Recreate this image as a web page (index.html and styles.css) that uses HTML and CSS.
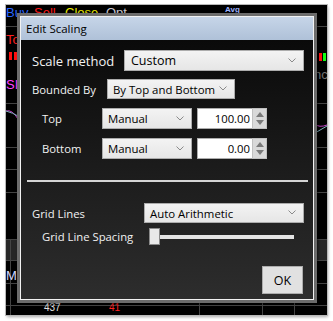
FILE: index.html
```html
<!DOCTYPE html>
<html>
<head>
<meta charset="utf-8">
<link rel="stylesheet" href="styles.css">
</head>
<body>
<div class="shot">
  <div class="chart">
    <div class="band" style="top:234px;height:21px"></div>
    <div class="hl" style="top:21px"></div>
    <div class="hl" style="top:98px"></div>
    <div class="hl" style="top:142px"></div>
    <div class="hl" style="top:164px"></div>
    <div class="hl" style="top:187px"></div>
    <div class="hl" style="top:234px"></div>
    <div class="hl" style="top:255px"></div>
    <div class="hl" style="top:278px"></div>
    <div class="hl" style="top:300px"></div>
    <div class="vl" style="left:4px;top:234px;height:76px"></div>
    <div class="vl" style="left:193px;top:296px;height:14px"></div>
    <div class="vl" style="left:256px;top:296px;height:14px"></div>
    <div class="vl" style="left:288px;top:296px;height:14px"></div>

    <span class="lab buy" style="left:0;top:0">Buy</span>
    <span class="lab sell" style="left:28px;top:0">Sell</span>
    <span class="lab close" style="left:59px;top:0">Close</span>
    <span class="lab opt" style="left:100px;top:0">Opt</span>
    <span class="lab avg" style="left:219px;top:0">Avg</span>
    <span class="lab vol" style="left:0;top:27px">Tol</span>
    <span class="bar red" style="left:3px;top:47px"></span>
    <span class="bar red" style="left:8px;top:47px"></span>
    <span class="lab rsi" style="left:0;top:72px">SI</span>
    <span class="lab m" style="left:0;top:263px">M</span>
    <span class="lab num437" style="left:38px;top:297px">437</span>
    <span class="lab num41" style="left:103px;top:297px">41</span>
    <span class="bar red" style="left:313px;top:48px"></span>
    <span class="bar green" style="left:317px;top:48px"></span>
    <span class="lab nc" style="left:308px;top:62px">nc</span>
    <svg class="curves" width="321" height="310" viewBox="0 0 321 310">
      <path d="M0 106 Q6 104 12 114" stroke="#c040c0" stroke-width="1" fill="none"/>
      <path d="M0 106 Q7 108 12 111" stroke="#80b0c0" stroke-width="1" fill="none"/>
      <path d="M309 119 Q313 123 321 120" stroke="#c040c0" stroke-width="1" fill="none"/>
      <path d="M309 128 L321 121" stroke="#80b0c0" stroke-width="1" fill="none"/>
    </svg>

    <div class="dialog">
      <div class="inner">
        <div class="titlebar">Edit Scaling</div>
        <div class="body">
          <div class="row r-scale">
            <span class="lbl big w-scale">Scale method</span>
            <div class="combo c-scale">Custom<svg class="chev" width="8" height="5" viewBox="0 0 8 5"><path d="M0.5 0.5 L4 4 L7.5 0.5" stroke="#8a8a8a" stroke-width="1" fill="none"/></svg></div>
          </div>
          <div class="row r-bound">
            <span class="lbl w-bound">Bounded By</span>
            <div class="combo c-bound">By Top and Bottom<svg class="chev" width="8" height="5" viewBox="0 0 8 5"><path d="M0.5 0.5 L4 4 L7.5 0.5" stroke="#8a8a8a" stroke-width="1" fill="none"/></svg></div>
          </div>
          <div class="row r-top">
            <span class="lbl ind w-sub">Top</span>
            <div class="combo c-man">Manual<svg class="chev" width="8" height="5" viewBox="0 0 8 5"><path d="M0.5 0.5 L4 4 L7.5 0.5" stroke="#8a8a8a" stroke-width="1" fill="none"/></svg></div>
            <div class="numbox">100.00</div>
            <div class="spin"><span class="up"></span><span class="down"></span></div>
          </div>
          <div class="row r-bot">
            <span class="lbl ind w-sub">Bottom</span>
            <div class="combo c-man">Manual<svg class="chev" width="8" height="5" viewBox="0 0 8 5"><path d="M0.5 0.5 L4 4 L7.5 0.5" stroke="#8a8a8a" stroke-width="1" fill="none"/></svg></div>
            <div class="numbox">0.00</div>
            <div class="spin"><span class="up"></span><span class="down"></span></div>
          </div>
          <div class="sep"></div>
          <div class="row r-grid">
            <span class="lbl w-grid">Grid Lines</span>
            <div class="combo c-grid">Auto Arithmetic<svg class="chev" width="8" height="5" viewBox="0 0 8 5"><path d="M0.5 0.5 L4 4 L7.5 0.5" stroke="#8a8a8a" stroke-width="1" fill="none"/></svg></div>
          </div>
          <div class="row r-spacing">
            <span class="lbl ind w-spacing">Grid Line Spacing</span>
            <div class="slider"><div class="thumb"></div><div class="track"></div></div>
          </div>
          <div class="foot"><div class="btn">OK</div></div>
        </div>
      </div>
    </div>
  </div>
</div>
</body>
</html>
```
FILE: styles.css
```css
* { box-sizing: border-box; }
html, body { margin: 0; padding: 0; background: #ffffff; }
body { font-family: "Open Sans", "Noto Sans", sans-serif; }
.shot { width: 333px; height: 321px; padding: 5px 6px 6px 6px; background: #fff; }
.chart {
  position: relative; width: 321px; height: 310px; background: #000;
  overflow: hidden;
  box-shadow: 0 0 0 1px #b8b8b8, 1px 2px 3px rgba(0,0,0,0.35);
}
.hl { position: absolute; left: 0; right: 0; height: 1px; background: #444; }
.vl { position: absolute; width: 1px; background: #444; }
.band { position: absolute; left: 0; right: 0; background: #262626; }
.lab { position: absolute; font-family: "Liberation Sans", sans-serif; font-size: 13px; line-height: 15px; white-space: nowrap; }
.buy { color: #2a66ff; }
.sell { color: #ff1a1a; }
.close { color: #e8e800; }
.opt { color: #c8c8d0; }
.avg { color: #9fb4ff; font-size: 8px; line-height: 9px; font-weight: bold; }
.vol { color: #ff2020; }
.rsi { color: #ff40ff; }
.m { color: #d0d8ff; }
.num437 { color: #e0e0e0; font-size: 10px; line-height: 12px; }
.num41 { color: #ff2020; font-size: 10px; line-height: 12px; }
.nc { color: #707070; }
.bar { position: absolute; width: 3px; height: 8px; }
.bar.red { background: #ff1010; }
.bar.green { background: #10ff10; }
.curves { position: absolute; left: 0; top: 0; }

.dialog {
  position: absolute; left: 11px; top: 8px; width: 300px; height: 290px;
  border: 3px solid #6c6c6c;
  box-shadow: 1px 1px 2px rgba(0,0,0,0.5);
}
.inner { height: 100%; border: 1px solid #f2f2f2; display: flex; flex-direction: column; }
.titlebar {
  height: 23px; flex: none; padding-left: 5px;
  background: linear-gradient(#c6d5e8, #afc1d8);
  color: #000; font-size: 11.5px; line-height: 23px;
}
.body {
  flex: 1; display: flex; flex-direction: column;
  padding: 10px 9px 4px 11px;
  background: linear-gradient(#0a0a0a, #2d2d2d);
  color: #f2f2f2;
}
.row { display: flex; align-items: center; flex: none; }
.lbl { font-size: 11.3px; white-space: nowrap; flex: none; }
.lbl.big { font-size: 13px; }
.lbl.ind { margin-left: 10px; }
.w-scale { width: 92px; }
.w-bound { width: 75px; }
.w-sub { width: 60px; }
.w-grid { width: 112px; }
.w-spacing { width: 107px; }

.combo {
  position: relative; flex: none;
  background: linear-gradient(#f3f3f3, #e6e6e6);
  border: 1px solid #acacac;
  color: #000; font-size: 11.4px;
  padding-left: 5px; display: flex; align-items: center; white-space: nowrap;
}
.chev { position: absolute; right: 7px; top: 50%; margin-top: -3px; }
.r-scale .combo { height: 21px; width: 180px; font-size: 12.5px; padding-left: 6px; }
.r-bound { margin-top: 8px; }
.c-bound { height: 20px; width: 128px; }
.r-top { margin-top: 9px; }
.r-bot { margin-top: 9px; }
.c-man { height: 21px; width: 90px; }
.numbox {
  margin-left: 5px; width: 55px; height: 21px; background: #fff;
  border: 1px solid #acacac; border-right: none;
  color: #000; font-size: 11.3px;
  text-align: right; padding-right: 2px; line-height: 19px;
}
.spin {
  width: 15px; height: 21px; background: #d9d9d9; border: 1px solid #c0c0c0;
  display: flex; flex-direction: column; align-items: center; justify-content: space-around;
  padding: 2px 0;
}
.up { width: 0; height: 0; border-left: 4px solid transparent; border-right: 4px solid transparent; border-bottom: 5px solid #7a7a7a; }
.down { width: 0; height: 0; border-left: 4px solid transparent; border-right: 4px solid transparent; border-top: 5px solid #7a7a7a; }
.sep { height: 2px; background: #d4d4d4; margin: 21px -4px 0 -5px; flex: none; }
.r-grid { margin-top: 21px; }
.c-grid { height: 20px; width: 160px; }
.r-spacing { margin-top: 5px; }
.slider { position: relative; display: flex; align-items: center; width: 145px; height: 17px; }
.thumb { width: 11px; height: 17px; background: #e9e9e9; border: 1px solid #8a8a8a; flex: none; position: relative; z-index: 1; }
.track { flex: 1; height: 4px; background: #e4e4e4; }
.foot { display: flex; justify-content: flex-end; margin-top: 21px; margin-right: 1px; }
.btn {
  width: 41px; height: 28px; background: #e1e1e1; border: 1px solid #adadad;
  color: #000; font-size: 12.5px; display: flex; align-items: center; justify-content: center;
}
```
